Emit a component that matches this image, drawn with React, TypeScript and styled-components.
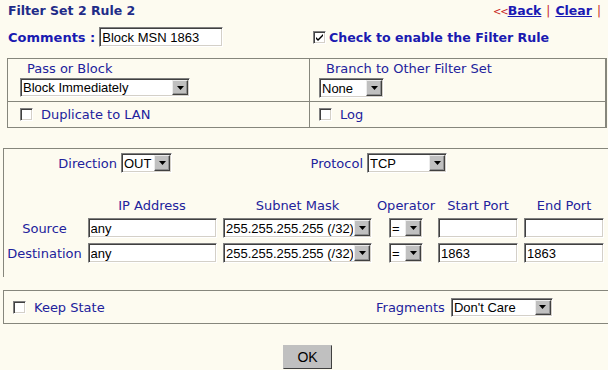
import React from 'react'
import styled, { createGlobalStyle } from 'styled-components'

const GlobalStyle = createGlobalStyle`
  html, body {
    margin: 0;
    padding: 0;
    overflow: hidden;
    background: #fdfbf0;
  }
  body {
    font-family: "DejaVu Sans", Verdana, sans-serif;
    font-size: 13px;
    color: #1e1e9e;
  }
`

const Page = styled.div`
  width: 608px;
  height: 370px;
  display: flex;
  flex-direction: column;
`

const TopBar = styled.div`
  height: 20px;
  padding: 0 7px 0 8px;
  display: flex;
  align-items: center;
  justify-content: space-between;
`

const Title = styled.div`
  font-weight: bold;
  font-size: 12.5px;
  color: #1f2c88;
`

const NavLinks = styled.div`
  font-size: 12px;
  color: #c81e1e;
  display: flex;
  align-items: baseline;
  gap: 5px;
`

const Arrows = styled.span`
  font-size: 10px;
  letter-spacing: -1px;
`

const NavLink = styled.a`
  color: #1a1ab4;
  font-weight: bold;
  font-size: 12.5px;
  text-decoration: underline;
  cursor: pointer;
`

const CommentsRow = styled.div`
  margin-top: 4px;
  height: 26px;
  padding-left: 8px;
  display: grid;
  grid-template-columns: 305px 1fr;
  align-items: center;
`

const LeftGroup = styled.div`
  display: flex;
  align-items: center;
  gap: 4px;
`

const BoldLabel = styled.span<{ $size?: number }>`
  font-weight: bold;
  font-size: ${({ $size }) => $size || 13}px;
  color: #1a1ab0;
  white-space: nowrap;
`

const CheckLabel = styled.label<{ $gap?: number }>`
  display: flex;
  align-items: center;
  gap: ${({ $gap }) => ($gap === undefined ? 5 : $gap)}px;
  cursor: pointer;
`

const Label = styled.span<{ $indent?: number }>`
  font-size: 13px;
  color: #22229c;
  padding-left: ${({ $indent }) => $indent || 0}px;
  white-space: nowrap;
`

const Box = styled.span`
  width: 13px;
  height: 13px;
  box-sizing: border-box;
  background: #fff;
  border: 1px solid;
  border-color: #808080 #fff #fff #808080;
  box-shadow: inset 1px 1px #404040, inset -1px -1px #d4d0c8;
  display: inline-flex;
  align-items: center;
  justify-content: center;
  flex: none;
`

const TextInput = styled.input<{ $w: number }>`
  width: ${({ $w }) => $w}px;
  height: 20px;
  box-sizing: border-box;
  border: 1px solid;
  border-color: #808080 #fff #fff #808080;
  box-shadow: inset 1px 1px #404040, inset -1px -1px #d4d0c8;
  background: #fff;
  font-family: "Liberation Sans", Arial, sans-serif;
  font-size: 13px;
  color: #000;
  padding: 1px 2px 0;
  outline: none;
`

const SelectBox = styled.div<{ $w: number; $h?: number }>`
  width: ${({ $w }) => $w}px;
  height: ${({ $h }) => $h || 20}px;
  box-sizing: border-box;
  border: 1px solid;
  border-color: #808080 #fff #fff #808080;
  box-shadow: inset 1px 1px #404040, inset -1px -1px #d4d0c8;
  background: #fff;
  display: inline-flex;
  align-items: stretch;
  padding: 1px;
  flex: none;
`

const NativeSelect = styled.select`
  appearance: none;
  -webkit-appearance: none;
  flex: 1;
  min-width: 0;
  border: none;
  background: transparent;
  font-family: "Liberation Sans", Arial, sans-serif;
  font-size: 13px;
  color: #000;
  padding: 0 1px;
  outline: none;
`

const ArrowButton = styled.span`
  width: 16px;
  box-sizing: border-box;
  background: #c0c0c0;
  border: 1px solid;
  border-color: #ececec #404040 #404040 #ececec;
  box-shadow: inset -1px -1px #909090;
  display: flex;
  align-items: center;
  justify-content: center;
  flex: none;
`

const Select = ({ w, h, options }: { w: number; h?: number; options: string[] }) => (
  <SelectBox $w={w} $h={h}>
    <NativeSelect defaultValue={options[0]}>
      {options.map((o) => (
        <option key={o}>{o}</option>
      ))}
    </NativeSelect>
    <ArrowButton>
      <svg width="7" height="4" viewBox="0 0 7 4">
        <path d="M0 0h7L3.5 4z" fill="#000" />
      </svg>
    </ArrowButton>
  </SelectBox>
)

const Checkbox = ({
  checked,
  gap,
  children,
}: {
  checked?: boolean
  gap?: number
  children: React.ReactNode
}) => (
  <CheckLabel $gap={gap}>
    <Box>
      {checked && (
        <svg width="9" height="9" viewBox="0 0 9 9">
          <path d="M1 4l2 2 5-5v2l-5 5-2-2z" fill="#000" />
        </svg>
      )}
    </Box>
    {children}
  </CheckLabel>
)

const PanelOne = styled.div`
  margin: 8px 0 0 7px;
  width: 600px;
  box-sizing: border-box;
  border: 1px solid #86867c;
  border-right-width: 2px;
  display: grid;
  grid-template-columns: 302px 1fr;
  grid-template-rows: 43px 25px;
`

const Cell = styled.div<{ $pad: number; $right?: boolean; $bottom?: boolean }>`
  padding: 2px 0 0 ${({ $pad }) => $pad}px;
  border-right: ${({ $right }) => ($right ? '1px solid #86867c' : 'none')};
  border-bottom: ${({ $bottom }) => ($bottom ? '1px solid #86867c' : 'none')};
  display: flex;
  flex-direction: column;
  align-items: flex-start;
  gap: 2px;
`

const CheckCell = styled(Cell)`
  padding-top: 0;
  justify-content: center;
`

const PanelTwo = styled.div`
  margin: 20px 0 0 3px;
  height: 128px;
  border-top: 1px solid #86867c;
  border-left: 1px solid #86867c;
  display: flex;
  flex-direction: column;
`

const DirectionRow = styled.div`
  margin-top: 4px;
  display: grid;
  grid-template-columns: 117px 184px 62px auto;
  align-items: center;
`

const RightLabel = styled(Label)`
  text-align: right;
  padding-right: 4px;
`

const AddressGrid = styled.div`
  margin-top: 24px;
  display: grid;
  grid-template-columns: 81px 134px 157px 60px 84px 88px;
  grid-template-rows: 21px 25px 20px;
  align-items: start;
  justify-items: center;
`

const HeadLabel = styled(Label)`
  line-height: 18px;
`

const RowLabel = styled(Label)`
  line-height: 21px;
`

const PanelThree = styled.div`
  margin: 13px 0 0 3px;
  height: 32px;
  border-top: 1px solid #86867c;
  border-left: 1px solid #86867c;
  border-bottom: 1px solid #86867c;
  display: grid;
  grid-template-columns: 363px auto;
  align-items: center;
  padding-left: 9px;
`

const FragGroup = styled.div`
  display: flex;
  align-items: center;
  gap: 6px;
`

const ButtonRow = styled.div`
  margin-top: 21px;
  padding-left: 283px;
`

const OkButton = styled.button`
  width: 49px;
  height: 24px;
  background: #c0c0c0;
  border: 1px solid;
  border-color: #c0c0c0 #404040 #404040 #c0c0c0;
  font-family: "Liberation Sans", Arial, sans-serif;
  font-size: 14px;
  color: #000;
  padding: 0;
`

const masks = ['255.255.255.255 (/32)']

export default function App() {
  return (
    <Page>
      <GlobalStyle />
      <TopBar>
        <Title>Filter Set 2 Rule 2</Title>
        <NavLinks>
          <span>
            <Arrows>&lt;&lt;</Arrows>
            <NavLink>Back</NavLink>
          </span>
          <span>|</span>
          <NavLink>Clear</NavLink>
          <span>|</span>
        </NavLinks>
      </TopBar>

      <CommentsRow>
        <LeftGroup>
          <BoldLabel>Comments :</BoldLabel>
          <TextInput $w={124} defaultValue="Block MSN 1863" />
        </LeftGroup>
        <Checkbox checked gap={3}>
          <BoldLabel $size={12.6}>Check to enable the Filter Rule</BoldLabel>
        </Checkbox>
      </CommentsRow>

      <PanelOne>
        <Cell $pad={12} $right $bottom>
          <Label $indent={7}>Pass or Block</Label>
          <Select w={170} h={19} options={['Block Immediately', 'Pass Immediately']} />
        </Cell>
        <Cell $pad={9} $bottom>
          <Label $indent={7}>Branch to Other Filter Set</Label>
          <Select w={65} options={['None']} />
        </Cell>
        <CheckCell $pad={12} $right>
          <Checkbox>
            <Label $indent={3}>Duplicate to LAN</Label>
          </Checkbox>
        </CheckCell>
        <CheckCell $pad={9}>
          <Checkbox>
            <Label $indent={3}>Log</Label>
          </Checkbox>
        </CheckCell>
      </PanelOne>

      <PanelTwo>
        <DirectionRow>
          <RightLabel>Direction</RightLabel>
          <Select w={51} options={['OUT', 'IN']} />
          <RightLabel>Protocol</RightLabel>
          <Select w={80} options={['TCP', 'UDP', 'ICMP']} />
        </DirectionRow>
        <AddressGrid>
          <span />
          <HeadLabel>IP Address</HeadLabel>
          <HeadLabel>Subnet Mask</HeadLabel>
          <HeadLabel>Operator</HeadLabel>
          <HeadLabel>Start Port</HeadLabel>
          <HeadLabel>End Port</HeadLabel>

          <RowLabel>Source</RowLabel>
          <TextInput $w={129} defaultValue="any" />
          <Select w={149} options={masks} />
          <Select w={34} options={['=']} />
          <TextInput $w={80} defaultValue="" />
          <TextInput $w={80} defaultValue="" />

          <RowLabel>Destination</RowLabel>
          <TextInput $w={129} defaultValue="any" />
          <Select w={149} options={masks} />
          <Select w={34} options={['=']} />
          <TextInput $w={80} defaultValue="1863" />
          <TextInput $w={80} defaultValue="1863" />
        </AddressGrid>
      </PanelTwo>

      <PanelThree>
        <Checkbox>
          <Label $indent={3}>Keep State</Label>
        </Checkbox>
        <FragGroup>
          <Label>Fragments</Label>
          <Select w={102} h={19} options={["Don't Care"]} />
        </FragGroup>
      </PanelThree>

      <ButtonRow>
        <OkButton>OK</OkButton>
      </ButtonRow>
    </Page>
  )
}
